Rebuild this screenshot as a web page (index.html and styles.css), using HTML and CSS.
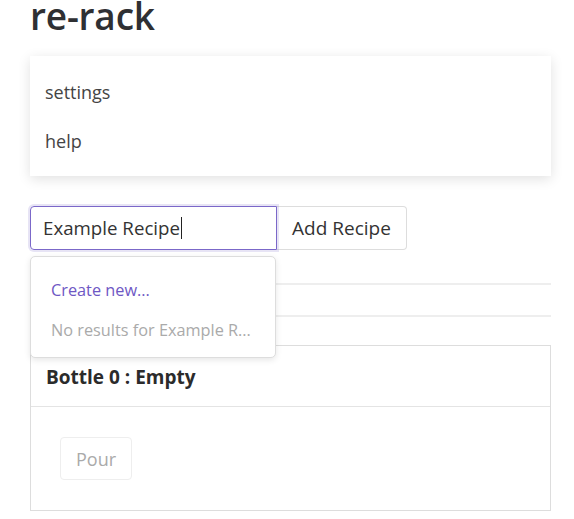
FILE: index.html
```
<!DOCTYPE html>
<html>
<head>
<meta charset="utf-8">
<link rel="stylesheet" href="styles.css">
</head>
<body>
<div class="page">
  <h1 class="title">re-rack</h1>
  <nav class="menu">
    <div class="menu-item">settings</div>
    <div class="menu-item">help</div>
  </nav>
  <div class="add-row">
    <div class="combo">
      <div class="input">Example Recipe<span class="caret"></span></div>
      <div class="dropdown">
        <div class="dd-item create">Create new...</div>
        <div class="dd-item empty">No results for Example R...</div>
      </div>
    </div>
    <button class="add-btn">Add Recipe</button>
  </div>
  <div class="list">
    <div class="list-line"></div>
    <div class="list-line"></div>
  </div>
  <section class="card">
    <div class="card-head">Bottle 0 : Empty</div>
    <div class="card-body">
      <button class="pour" disabled>Pour</button>
    </div>
  </section>
</div>
</body>
</html>
```
FILE: styles.css
```
* { box-sizing: border-box; }
html, body { margin: 0; padding: 0; background: #fff; }
body {
  font-family: "Open Sans", "Noto Sans", sans-serif;
  color: #333;
}
.page {
  width: 521px;
  margin-left: 30px;
}
.title {
  margin: -8px 0 0 0;
  font-size: 37px;
  font-weight: 600;
  line-height: 48px;
  height: 64px;
  letter-spacing: -0.2px;
  color: #2f3033;
}
.menu {
  background: #fff;
  box-shadow: 0 3px 12px rgba(0,0,0,0.12);
  padding: 12px 0;
  height: 120px;
}
.menu-item {
  padding: 0 15px;
  height: 49px;
  line-height: 48px;
  font-size: 18px;
  color: #444;
}
.add-row {
  display: flex;
  margin-top: 30px;
  height: 44px;
}
.combo { position: relative; width: 247px; }
.input {
  height: 44px;
  border: 1px solid #7b68c9;
  border-radius: 4px 0 0 4px;
  box-shadow: 0 0 0 2px rgba(123,104,201,0.18);
  padding: 0 12px;
  font-size: 18.7px;
  line-height: 42px;
  color: #333;
  display: flex;
  align-items: center;
}
.caret {
  display: inline-block;
  width: 1px;
  height: 22px;
  background: #222;
  margin-left: 1px;
}
.dropdown {
  position: absolute;
  top: 50px;
  left: 0;
  width: 246px;
  height: 102px;
  background: #fff;
  border: 1px solid #ddd;
  border-radius: 5px;
  box-shadow: 0 2px 6px rgba(0,0,0,0.1);
  padding: 21px 0 0 20px;
  z-index: 2;
}
.dd-item {
  font-size: 16.3px;
  height: 40px;
  line-height: 24px;
  white-space: nowrap;
}
.create { color: #6e57c4; }
.empty { color: #aaa; }
.add-btn {
  height: 44px;
  width: 130px;
  margin-left: 0;
  border: 1px solid #ddd;
  border-left: none;
  border-radius: 0 4px 4px 0;
  background: #fff;
  font-family: inherit;
  font-size: 19px;
  color: #333;
  padding: 0;
}
.list { margin-top: 33px; }
.list-line {
  height: 32px;
  border-top: 2px solid #eee;
}
.list-line:last-child { height: 30px; }
.card {
  border: 1px solid #ddd;
  height: 166px;
}
.card-head {
  height: 61px;
  border-bottom: 1px solid #e4e4e4;
  padding: 0 15px;
  font-size: 19px;
  font-weight: 700;
  line-height: 62px;
  color: #2b2b2b;
}
.card-body { padding: 30px 29px; }
.pour {
  width: 72px;
  height: 43px;
  border: 1px solid #eee;
  border-radius: 4px;
  background: #fff;
  color: #aaa;
  font-family: inherit;
  font-size: 18px;
  padding: 0;
}
```
